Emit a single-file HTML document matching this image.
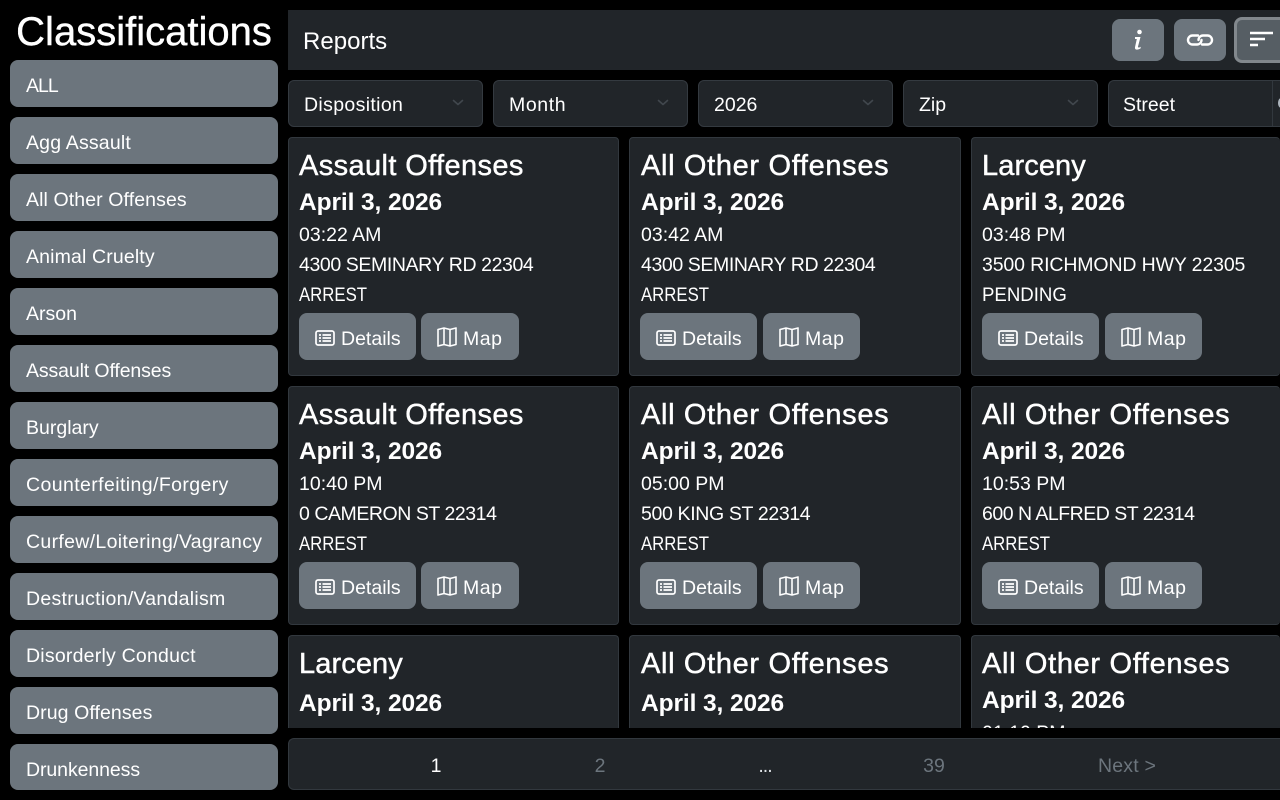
<!DOCTYPE html>
<html lang="en"><head><meta charset="utf-8"><title>Classifications</title>
<style>
*{box-sizing:border-box}
html,body{margin:0;padding:0;width:1280px;height:800px;overflow:hidden;background:#000;color:#fff;font-family:"Liberation Sans",Arial,sans-serif}
.h{position:absolute;left:0;top:8px;width:288px;text-align:center;font-size:40px;line-height:48px;font-weight:400;-webkit-text-stroke:.4px #fff}
.s{position:absolute;left:10px;width:268px;height:47px;overflow:hidden;background:#6c757d;border-radius:8px;font-size:19.5px;line-height:52px;padding-left:16px;white-space:nowrap}
.top{position:absolute;left:288px;top:10px;width:992px;height:60px;background:#212529}
.top span{position:absolute;left:15px;top:15px;font-size:24px;line-height:34px;letter-spacing:.02px}
.b{position:absolute;width:52px;height:42px;top:19px;background:#6c757d;border-radius:8px}
.b svg{position:absolute}
.f{position:absolute;top:80px;width:195px;height:47px;background:#212529;border:1px solid #343a40;border-radius:6px;font-size:19.5px;line-height:49px;padding-left:15px}
.f svg{position:absolute;right:18px;top:18px}
.c{position:absolute;width:331px;height:239px;background:#212529;border:1px solid #32383e;border-radius:4px;padding:9px 0 0 10px;white-space:nowrap}
.mid{width:332px;padding-left:11px}
.low{height:93px;border-bottom:0;border-radius:4px 4px 0 0;overflow:hidden}
.t{font-size:29px;line-height:38px;height:38px;-webkit-text-stroke:.45px #fff}
.a{letter-spacing:.38px}.o{letter-spacing:.66px}.l{letter-spacing:.1px}
.d{font-size:24.5px;line-height:35px;height:35px;font-weight:700;letter-spacing:-.1px}
.r{font-size:19.5px;line-height:30px;height:30px}
.u{display:inline-block;transform:scaleX(.86);transform-origin:0 50%}
.bt{position:absolute;top:175px;height:47px;background:#6c757d;border-radius:8px;font-size:19.5px;line-height:52px}
.bt svg{position:absolute;left:16px;top:16px}
.bt svg.mp{top:14px}
.bt span{position:absolute;left:42px;top:0}
.bt.m span{letter-spacing:.5px}
.cl{position:absolute;left:0;top:0;width:1280px;height:728px;overflow:hidden}
.pg{position:absolute;left:288px;top:738px;width:1000px;height:52px;background:#212529;border:1px solid #32383e;border-radius:6px}
.pg span{position:absolute;top:0;font-size:19.5px;line-height:55px;transform:translateX(-50%);color:#6c757d;white-space:nowrap}
</style></head><body>
<svg width="0" height="0" style="position:absolute">
<symbol id="l" viewBox="0 0 20 18"><rect x="1" y="2" width="18" height="14" rx="2" fill="none" stroke="#fff" stroke-width="1.7"/><path d="M4 6h2M7.500 6H16M4 9h2M7.500 9H16M4 12h2M7.500 12H16" stroke="#fff" stroke-width="1.700" fill="none"/></symbol>
<symbol id="m" viewBox="0 0 20 20"><path d="M1 2.500 7 1l6 1.500L19 1v16.500L13 19l-6-1.500L1 19zM7 1v16.500M13 2.500V19" fill="none" stroke="#fff" stroke-width="1.600" stroke-linejoin="round"/></symbol>
<symbol id="v" viewBox="0 0 12 8"><path d="M1.500 1.500 6 5.500l4.500-4" fill="none" stroke="#41474d" stroke-width="1.600" stroke-linecap="round" stroke-linejoin="round"/></symbol>
</svg>

<div class="h">Classifications</div>
<div class="s" style="top:60px;letter-spacing:-1px">ALL</div>
<div class="s" style="top:117px;letter-spacing:.18px">Agg Assault</div>
<div class="s" style="top:174px;letter-spacing:.1px">All Other Offenses</div>
<div class="s" style="top:231px;letter-spacing:.14px">Animal Cruelty</div>
<div class="s" style="top:288px">Arson</div>
<div class="s" style="top:345px;letter-spacing:-.12px">Assault Offenses</div>
<div class="s" style="top:402px">Burglary</div>
<div class="s" style="top:459px;letter-spacing:.4px">Counterfeiting/Forgery</div>
<div class="s" style="top:516px;letter-spacing:.32px">Curfew/Loitering/Vagrancy</div>
<div class="s" style="top:573px;letter-spacing:.28px">Destruction/Vandalism</div>
<div class="s" style="top:630px;letter-spacing:.22px">Disorderly Conduct</div>
<div class="s" style="top:687px;letter-spacing:.08px">Drug Offenses</div>
<div class="s" style="top:744px;height:46px;letter-spacing:-.08px">Drunkenness</div>

<div class="top"><span>Reports</span></div>
<div class="b" style="left:1112px"><svg style="left:20px;top:10px" width="12" height="22" viewBox="0 0 12 22"><circle cx="7.500" cy="3" r="2.300" fill="#fff"/><path d="M3 8h5.500L6 17.500c-.3 1.200.8 1.300 2.800.2l-.3 1.800c-2 1.300-6 2-5.500-1.300L4.800 10H3z" fill="#fff"/></svg></div>
<div class="b" style="left:1174px"><svg style="left:12px;top:14px" width="28" height="14" viewBox="0 0 28 14"><path d="M12 2.500H6.500a4.500 4.500 0 0 0 0 9H11a4.500 4.500 0 0 0 4.500-4.500" fill="none" stroke="#fff" stroke-width="2.400" stroke-linecap="round"/><path d="M16 11.500h5.500a4.500 4.500 0 0 0 0-9H17A4.500 4.500 0 0 0 12.500 7" fill="none" stroke="#fff" stroke-width="2.400" stroke-linecap="round"/></svg></div>
<div class="b" style="left:1234px;top:17px;width:60px;height:46px;background:#565e64;border:3px solid #82888d"><svg style="left:13px;top:10px" width="26" height="18" viewBox="0 0 26 18"><path d="M0 3h23M0 9h15M0 15h8" stroke="#fff" stroke-width="2.400" fill="none"/></svg></div>

<div class="f" style="left:288px;letter-spacing:.35px">Disposition<svg width="12" height="8"><use href="#v"/></svg></div>
<div class="f" style="left:493px;letter-spacing:.6px">Month<svg width="12" height="8"><use href="#v"/></svg></div>
<div class="f" style="left:698px">2026<svg width="12" height="8"><use href="#v"/></svg></div>
<div class="f" style="left:903px">Zip<svg width="12" height="8"><use href="#v"/></svg></div>
<div class="f" style="left:1108px;width:172px;border-right:0;border-radius:6px 0 0 6px;padding-left:14px">Street<div style="position:absolute;left:163px;top:0;width:1px;height:45px;background:#32383e"></div><div style="position:absolute;left:169px;top:17px;width:6px;height:10px;border:2px solid #adb5bd;border-radius:50%"></div></div>

<div class="cl">
<div class="c" style="left:288px;top:137px"><div class="t a">Assault Offenses</div><div class="d">April 3, 2026</div><div class="r">03:22 AM</div><div class="r" style="letter-spacing:-.4px">4300 SEMINARY RD 22304</div><div class="r"><span class="u">ARREST</span></div>
<div class="bt" style="left:10px;width:117px"><svg width="20" height="18"><use href="#l"/></svg><span>Details</span></div><div class="bt m" style="left:132px;width:98px"><svg class="mp" width="20" height="20"><use href="#m"/></svg><span>Map</span></div></div>
<div class="c mid" style="left:629px;top:137px"><div class="t o">All Other Offenses</div><div class="d">April 3, 2026</div><div class="r">03:42 AM</div><div class="r" style="letter-spacing:-.4px">4300 SEMINARY RD 22304</div><div class="r"><span class="u">ARREST</span></div>
<div class="bt" style="left:10px;width:117px"><svg width="20" height="18"><use href="#l"/></svg><span>Details</span></div><div class="bt m" style="left:133px;width:97px"><svg class="mp" width="20" height="20"><use href="#m"/></svg><span>Map</span></div></div>
<div class="c" style="left:971px;top:137px;width:309px;border-right:0"><div class="t l">Larceny</div><div class="d">April 3, 2026</div><div class="r">03:48 PM</div><div class="r" style="letter-spacing:-.13px">3500 RICHMOND HWY 22305</div><div class="r"><span class="u" style="transform:scaleX(.955)">PENDING</span></div>
<div class="bt" style="left:10px;width:117px"><svg width="20" height="18"><use href="#l"/></svg><span>Details</span></div><div class="bt m" style="left:133px;width:97px"><svg class="mp" width="20" height="20"><use href="#m"/></svg><span>Map</span></div></div>

<div class="c" style="left:288px;top:386px"><div class="t a">Assault Offenses</div><div class="d">April 3, 2026</div><div class="r">10:40 PM</div><div class="r" style="letter-spacing:-.45px">0 CAMERON ST 22314</div><div class="r"><span class="u">ARREST</span></div>
<div class="bt" style="left:10px;width:117px"><svg width="20" height="18"><use href="#l"/></svg><span>Details</span></div><div class="bt m" style="left:132px;width:98px"><svg class="mp" width="20" height="20"><use href="#m"/></svg><span>Map</span></div></div>
<div class="c mid" style="left:629px;top:386px"><div class="t o">All Other Offenses</div><div class="d">April 3, 2026</div><div class="r">05:00 PM</div><div class="r" style="letter-spacing:-.35px">500 KING ST 22314</div><div class="r"><span class="u">ARREST</span></div>
<div class="bt" style="left:10px;width:117px"><svg width="20" height="18"><use href="#l"/></svg><span>Details</span></div><div class="bt m" style="left:133px;width:97px"><svg class="mp" width="20" height="20"><use href="#m"/></svg><span>Map</span></div></div>
<div class="c" style="left:971px;top:386px;width:309px;border-right:0"><div class="t o">All Other Offenses</div><div class="d">April 3, 2026</div><div class="r">10:53 PM</div><div class="r" style="letter-spacing:-.5px">600 N ALFRED ST 22314</div><div class="r"><span class="u">ARREST</span></div>
<div class="bt" style="left:10px;width:117px"><svg width="20" height="18"><use href="#l"/></svg><span>Details</span></div><div class="bt m" style="left:133px;width:97px"><svg class="mp" width="20" height="20"><use href="#m"/></svg><span>Map</span></div></div>

<div class="c low" style="left:288px;top:635px"><div class="t l">Larceny</div><div class="d" style="margin-top:3px">April 3, 2026</div></div>
<div class="c low mid" style="left:629px;top:635px"><div class="t o">All Other Offenses</div><div class="d" style="margin-top:3px">April 3, 2026</div></div>
<div class="c low" style="left:971px;top:635px;width:309px;border-right:0"><div class="t o">All Other Offenses</div><div class="d">April 3, 2026</div><div class="r">01:10 PM</div></div>
</div>

<div class="pg" style="width:992px;border-right:0;border-radius:6px 0 0 6px">
<span style="left:147px;color:#fff">1</span>
<span style="left:311px">2</span>
<span style="left:476px;color:#dee2e6;letter-spacing:-1px">...</span>
<span style="left:645px">39</span>
<span style="left:838px;letter-spacing:.2px">Next &gt;</span>
</div>
</body></html>
